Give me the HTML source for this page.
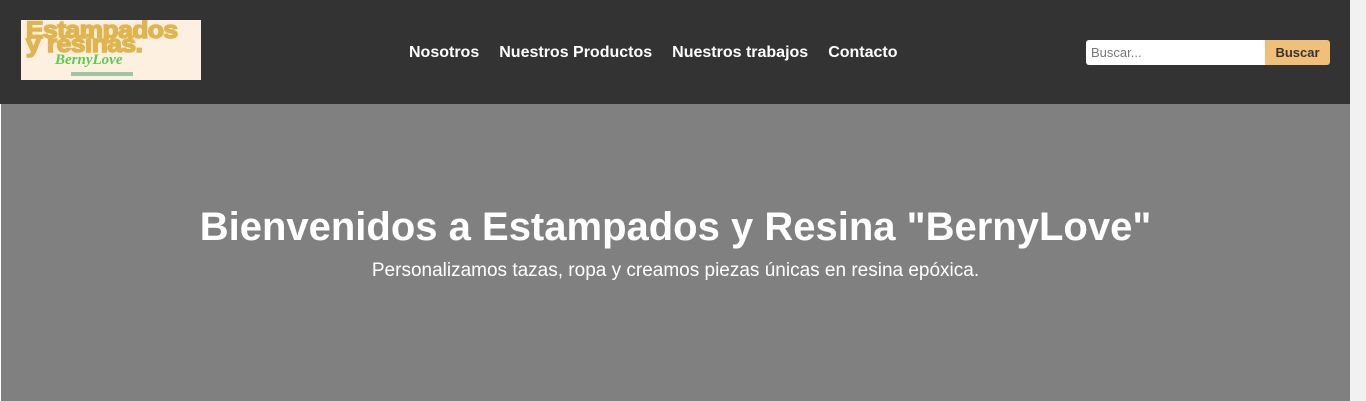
<!DOCTYPE html>
<html><head><style>
body{margin:0;width:1366px;height:401px;overflow:hidden;font-family:"Liberation Sans",Arial,sans-serif;background:#fff;position:relative}
.hd{position:absolute;left:0;top:0;width:1350px;height:104px;background:#333}
.logo{position:absolute;left:21px;top:20px;width:180px;height:60px;background:#fdf0e0;overflow:hidden}
.l1{position:absolute;left:5px;top:4px;font:bold 24px/14px "Liberation Sans",sans-serif;color:#e0b44e;letter-spacing:-0.5px;transform:scaleX(1.1);transform-origin:left top;-webkit-text-stroke:1.5px #e0b44e}
.l2{position:absolute;left:34px;top:32px;font:italic bold 15px "Liberation Serif",serif;color:#5ccc4c}
.l3{position:absolute;left:50px;top:52px;width:62px;height:4px;background:#9cc8a0}
nav{position:absolute;top:44px;left:409px;color:#fff;font-weight:bold;font-size:16px;white-space:nowrap}
nav span{margin-right:20px}
.in{position:absolute;left:1086px;top:40px;width:179px;height:25px;background:#fff;border-radius:3px 0 0 3px;font-size:13px;color:#777;line-height:25px;box-sizing:border-box;padding-left:5px}
.bt{position:absolute;left:1265px;top:40px;width:65px;height:25px;background:#f0c078;border-radius:0 3px 3px 0;font-size:13px;font-weight:bold;color:#333;text-align:center;line-height:25px}
.hero{position:absolute;left:1px;top:104px;width:1349px;height:297px;background:#808080;color:#fff;text-align:center}
h1{margin:0;position:absolute;top:101px;width:100%;font-size:40px;font-weight:bold}
p{margin:0;position:absolute;top:156px;width:100%;font-size:19px}
.sb{position:absolute;left:1350px;top:0;width:16px;height:401px;background:#f1f1f1}
.th{position:absolute;left:1352px;top:17px;width:12px;height:120px;background:#c1c1c1}
</style></head><body>
<div class="hd">
<div class="logo"><div class="l1">Estampados<br>y resinas.</div><div class="l2">BernyLove</div><div class="l3"></div></div>
<nav><span>Nosotros</span><span>Nuestros Productos</span><span>Nuestros trabajos</span><span>Contacto</span></nav>
<div class="in">Buscar...</div><div class="bt">Buscar</div>
</div>
<div class="hero"><h1>Bienvenidos a Estampados y Resina "BernyLove"</h1><p>Personalizamos tazas, ropa y creamos piezas únicas en resina epóxica.</p></div>
<div class="sb"><div class="th"></div></div>
</body></html>
